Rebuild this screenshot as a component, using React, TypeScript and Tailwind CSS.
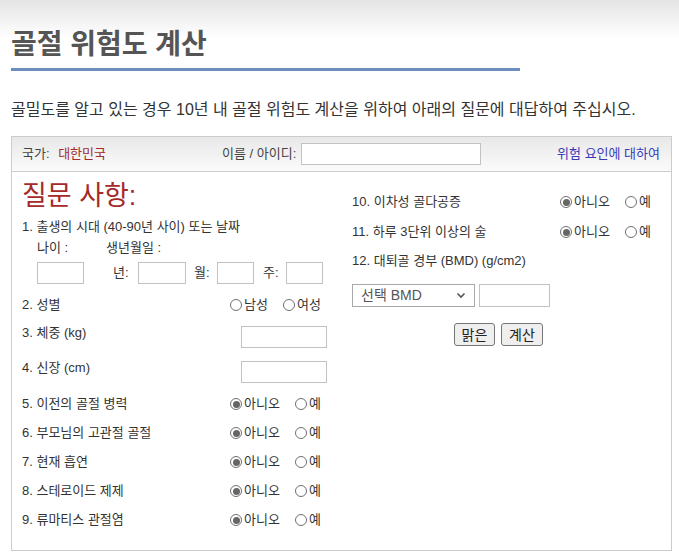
import React from "react";

const font = "font-['Liberation_Sans','Noto_Sans_CJK_KR',sans-serif]";

function Radio({ checked }: { checked?: boolean }) {
  return (
    <span className="w-[12px] h-[12px] rounded-full border border-[#707070] bg-white flex items-center justify-center shrink-0">
      {checked && <span className="w-[7px] h-[7px] rounded-full bg-[#666]" />}
    </span>
  );
}

function Choice({ a, b, first = 65, checkFirst = true }: { a: string; b: string; first?: number; checkFirst?: boolean }) {
  return (
    <div className="flex items-center">
      <span className={`flex items-center gap-[2px] ${first === 65 ? "w-[65px]" : "w-[53px]"}`}>
        <Radio checked={checkFirst} />
        <span>{a}</span>
      </span>
      <span className="flex items-center gap-[2px]">
        <Radio />
        <span>{b}</span>
      </span>
    </div>
  );
}

function Field({ className }: { className: string }) {
  return <div className={`h-[22px] border border-[#c2c2c2] bg-white ${className}`} />;
}

function YesNoRow({ label, className }: { label: string; className: string }) {
  return (
    <div className={`flex items-center h-[20px] ${className}`}>
      <span className="w-[208px]">{label}</span>
      <Choice a="아니오" b="예" />
    </div>
  );
}

export default function App() {
  return (
    <div
      className={`${font} w-[679px] min-h-[558px] bg-[linear-gradient(to_bottom,#e4e4e4_0px,#ffffff_38px)] pl-[11px] pt-[30px] text-[#333]`}
    >
      <h1 className="w-[509px] text-[28px] leading-[30px] font-bold text-[#555] pb-[8px] border-b-[3px] border-[#6a8fbf]">
        골절 위험도 계산
      </h1>

      <p className="mt-[29px] text-[16px] leading-[20px] text-[#333]">
        골밀도를 알고 있는 경우 10년 내 골절 위험도 계산을 위하여 아래의 질문에 대답하여 주십시오.
      </p>

      <div className="mt-[16px] w-[661px] border border-[#ccc] bg-white">
        {/* header */}
        <div className="h-[35px] border-b border-[#ccc] bg-[linear-gradient(to_bottom,#e8e8e8,#fbfbfb)] flex items-center pl-[10px] pr-[11px] text-[13px] text-[#444]">
          <div className="w-[200px]">
            국가: <span className="ml-[5px] text-[#a52a2a]">대한민국</span>
          </div>
          <span>이름 / 아이디:</span>
          <Field className="ml-[5px] w-[180px]" />
          <a className="ml-auto text-[#3a3ab8]">위험 요인에 대하여</a>
        </div>

        {/* body */}
        <div className="flex text-[13px] text-[#333]">
          <div className="w-[340px] pl-[10px] pb-[20px] flex flex-col">
            <div className="mt-[9px] h-[30px] leading-[30px] text-[27px] text-[#a52a2a]">질문 사항:</div>
            <div className="mt-[6px] h-[20px] flex items-center">1. 출생의 시대 (40-90년 사이) 또는 날짜</div>
            <div className="mt-[1px] h-[20px] flex items-center pl-[15px]">
              <span className="w-[69px]">나이 :</span>
              <span>생년월일 :</span>
            </div>
            <div className="mt-[4px] h-[22px] flex items-center pl-[15px]">
              <Field className="w-[47px]" />
              <span className="ml-[29px] w-[25px]">년:</span>
              <Field className="w-[48px]" />
              <span className="ml-[8px] w-[23px]">월:</span>
              <Field className="w-[37px]" />
              <span className="ml-[9px] w-[23px]">주:</span>
              <Field className="w-[37px]" />
            </div>
            <div className="mt-[11px] h-[20px] flex items-center">
              <span className="w-[208px]">2. 성별</span>
              <Choice a="남성" b="여성" first={53} checkFirst={false} />
            </div>
            <div className="mt-[11px] h-[22px] flex items-start">
              <span className="w-[219px] leading-[14px]">3. 체중 (kg)</span>
              <Field className="w-[86px]" />
            </div>
            <div className="mt-[13px] h-[22px] flex items-start">
              <span className="w-[219px] leading-[14px]">4. 신장 (cm)</span>
              <Field className="w-[86px]" />
            </div>
            <YesNoRow label="5. 이전의 골절 병력" className="mt-[11px]" />
            <YesNoRow label="6. 부모님의 고관절 골절" className="mt-[9px]" />
            <YesNoRow label="7. 현재 흡연" className="mt-[9px]" />
            <YesNoRow label="8. 스테로이드 제제" className="mt-[9px]" />
            <YesNoRow label="9. 류마티스 관절염" className="mt-[9px]" />
          </div>

          <div className="flex-1 flex flex-col">
            <YesNoRow label="10. 이차성 골다공증" className="mt-[20px]" />
            <YesNoRow label="11. 하루 3단위 이상의 술" className="mt-[10px]" />
            <div className="mt-[9px] h-[20px] flex items-center">12. 대퇴골 경부 (BMD) (g/cm2)</div>
            <div className="mt-[13px] h-[23px] flex items-center">
              <div className="w-[123px] h-[23px] border border-[#a9a9a9] bg-white flex items-center justify-between pl-[8px] pr-[8px] text-[14px] text-[#555]">
                <span>선택 BMD</span>
                <svg width="10" height="7" viewBox="0 0 10 7" fill="none">
                  <path d="M1.5 1.5 L5 5 L8.5 1.5" stroke="#555" strokeWidth="1.6" />
                </svg>
              </div>
              <div className="ml-[4px] w-[71px] h-[23px] border border-[#c2c2c2] bg-white" />
            </div>
            <div className="mt-[16px] pl-[102px] flex gap-[6px] text-[14px] text-[#222]">
              <button className="w-[41px] h-[23px] bg-[#efefef] border border-[#767676] rounded-[3px] leading-none">맑은</button>
              <button className="w-[42px] h-[23px] bg-[#efefef] border border-[#767676] rounded-[3px] leading-none">계산</button>
            </div>
          </div>
        </div>
      </div>
    </div>
  );
}
